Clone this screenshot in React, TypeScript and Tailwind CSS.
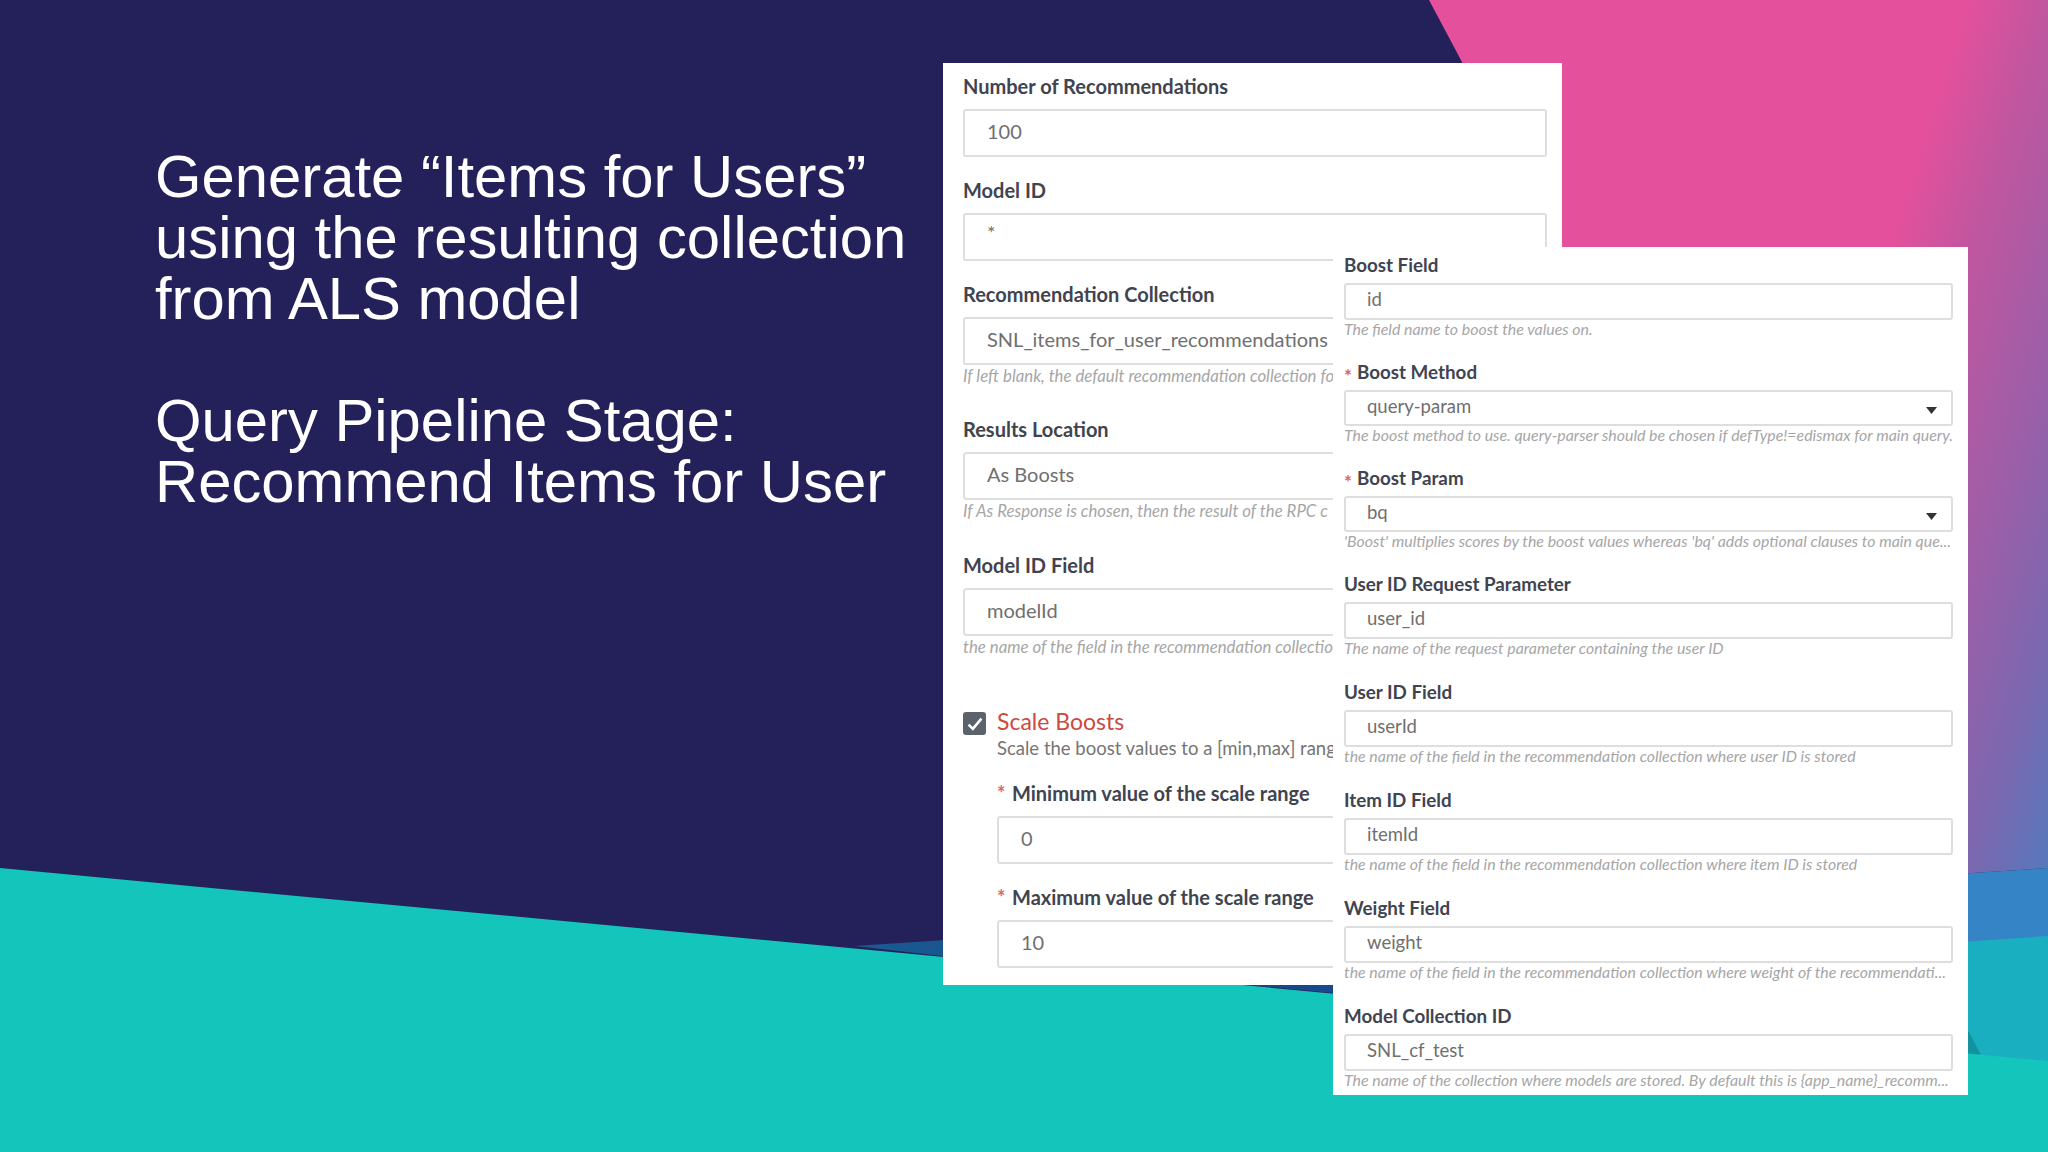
import type { ReactNode } from "react";

const lato = "font-['Lato','Liberation_Sans',sans-serif]";

function BigField({ label, value, hint, required }: { label: string; value: ReactNode; hint?: string; required?: boolean }) {
  return (
    <div className={required ? "w-[550px]" : "w-[584px]"}>
      <div className={`relative h-[46px] flex items-center text-[20px] font-bold text-[#3f4450] ${required ? "pl-[15px]" : ""}`}>
        {required && <span className="absolute left-0 top-[8px] text-[#e0645f]">*</span>}
        {label}
      </div>
      <div className="h-[48px] pl-[22px] pb-[5px] flex items-center rounded-[3px] border-2 border-[#dedede] bg-white text-[20px] text-[#6f6f6f]">
        {value}
      </div>
      {hint && <div className="h-[22px] leading-[22px] whitespace-nowrap italic text-[16.8px] text-[#a6a6a6]">{hint}</div>}
    </div>
  );
}

function SmallField({ label, value, hint, required, select, rowClass = "h-[108px]" }: { label: string; value: string; hint: string; required?: boolean; select?: boolean; rowClass?: string }) {
  return (
    <div className={rowClass}>
      <div className={`relative h-[36px] flex items-center text-[18.8px] font-bold text-[#3f4450] ${required ? "pl-[13px]" : ""}`}>
        {required && <span className="absolute left-0 top-[8px] text-[#e0645f]">*</span>}
        {label}
      </div>
      <div className={`relative ${select ? "h-[36px]" : "h-[37px]"} pl-[21px] pb-[3px] flex items-center rounded-[3px] border-2 border-[#dedede] bg-white text-[18.5px] text-[#6f6f6f]`}>
        {value}
        {select && (
          <svg className="absolute right-[14px] top-[15px]" width="11" height="7" viewBox="0 0 11 7">
            <path d="M0 0h11L5.5 7z" fill="#333" />
          </svg>
        )}
      </div>
      <div className="h-[18px] leading-[18px] whitespace-nowrap italic text-[15.9px] text-[#a6a6a6]">{hint}</div>
    </div>
  );
}

export default function App() {
  return (
    <div className={`relative w-[2048px] h-[1152px] overflow-hidden bg-[#24205a] ${lato}`}>
      {/* slide background shapes */}
      <svg className="absolute inset-0" width="2048" height="1152" viewBox="0 0 2048 1152">
        <defs>
          <linearGradient id="side" gradientUnits="userSpaceOnUse" x1="1966" y1="0" x2="2296" y2="109">
            <stop offset="0" stopColor="#e5509c" />
            <stop offset="0.22" stopColor="#c2569f" />
            <stop offset="0.55" stopColor="#9b5fa8" />
            <stop offset="0.8" stopColor="#7a68b0" />
            <stop offset="1" stopColor="#5878bc" />
          </linearGradient>
          <linearGradient id="blue" gradientUnits="userSpaceOnUse" x1="855" y1="0" x2="1968" y2="0">
            <stop offset="0" stopColor="#1a5a92" />
            <stop offset="0.4" stopColor="#16478a" />
            <stop offset="1" stopColor="#3585c6" />
          </linearGradient>
        </defs>
        <polygon points="1429,0 2048,0 2048,868 1500,904 1462,62" fill="url(#side)" />
        <polygon points="855,946 2048,868 2048,1062 1333,993 942,956" fill="url(#blue)" />
        <polygon points="1600,967 2048,936 2048,1062 1600,1020" fill="#1aafc0" />
        <polygon points="1968,1032 1969,1032 1981,1055 1968,1055" fill="#14919f" />
        <polygon points="0,868 2048,1061 2048,1152 0,1152" fill="#13c5bb" />
      </svg>

      <div className="relative pl-[155px] pt-[146px] text-[59.8px] leading-[61px] text-white font-['Liberation_Sans',Arial,sans-serif]">
        <div>Generate “Items for Users”</div>
        <div>using the resulting collection</div>
        <div>from ALS model</div>
        <div className="mt-[61px]">Query Pipeline Stage:</div>
        <div>Recommend Items for User</div>
      </div>

      {/* first screenshot */}
      <div className="absolute left-[943px] top-[63px] w-[619px] h-[922px] bg-white pl-[20px]">
        <BigField label="Number of Recommendations" value="100" />
        <div className="mt-[10px]">
          <BigField label="Model ID" value={<span className="relative -top-[3px]">*</span>} />
        </div>
        <div className="mt-[10px]">
          <BigField label="Recommendation Collection" value="SNL_items_for_user_recommendations" hint="If left blank, the default recommendation collection fo" />
        </div>
        <div className="mt-[19px]">
          <BigField label="Results Location" value="As Boosts" hint="If As Response is chosen, then the result of the RPC c" />
        </div>
        <div className="mt-[20px]">
          <BigField label="Model ID Field" value="modelId" hint="the name of the field in the recommendation collectio" />
        </div>
        <div className="mt-[51px] flex gap-[11px]">
          <div className="mt-[3px] w-[23px] h-[23px] rounded-[3px] bg-[#5c626c] flex items-center justify-center">
            <svg width="16" height="14" viewBox="0 0 15 13">
              <path d="M1.5 7l4 4 8-9.5" fill="none" stroke="#fff" strokeWidth="2.4" />
            </svg>
          </div>
          <div>
            <div className="text-[23px] leading-[25px] text-[#cc4a3e]">Scale Boosts</div>
            <div className="text-[18.5px] leading-[28px] text-[#757575] whitespace-nowrap">Scale the boost values to a [min,max] rang</div>
          </div>
        </div>
        <div className="ml-[34px] mt-[8px]">
          <BigField required label="Minimum value of the scale range" value="0" />
          <div className="mt-[10px]">
            <BigField required label="Maximum value of the scale range" value="10" />
          </div>
        </div>
      </div>

      {/* second screenshot, overlaps the first */}
      <div className="absolute left-[1333px] top-[247px] w-[635px] h-[848px] overflow-hidden bg-white pl-[11px] pr-[15px]">
        <SmallField rowClass="h-[107px]" label="Boost Field" value="id" hint="The field name to boost the values on." />
        <SmallField rowClass="h-[106px]" required select label="Boost Method" value="query-param" hint="The boost method to use. query-parser should be chosen if defType!=edismax for main query." />
        <SmallField rowClass="h-[106px]" required select label="Boost Param" value="bq" hint="'Boost' multiplies scores by the boost values whereas 'bq' adds optional clauses to main que..." />
        <SmallField label="User ID Request Parameter" value="user_id" hint="The name of the request parameter containing the user ID" />
        <SmallField label="User ID Field" value="userId" hint="the name of the field in the recommendation collection where user ID is stored" />
        <SmallField label="Item ID Field" value="itemId" hint="the name of the field in the recommendation collection where item ID is stored" />
        <SmallField label="Weight Field" value="weight" hint="the name of the field in the recommendation collection where weight of the recommendati..." />
        <SmallField label="Model Collection ID" value="SNL_cf_test" hint="The name of the collection where models are stored. By default this is {app_name}_recomm..." />
      </div>
    </div>
  );
}
